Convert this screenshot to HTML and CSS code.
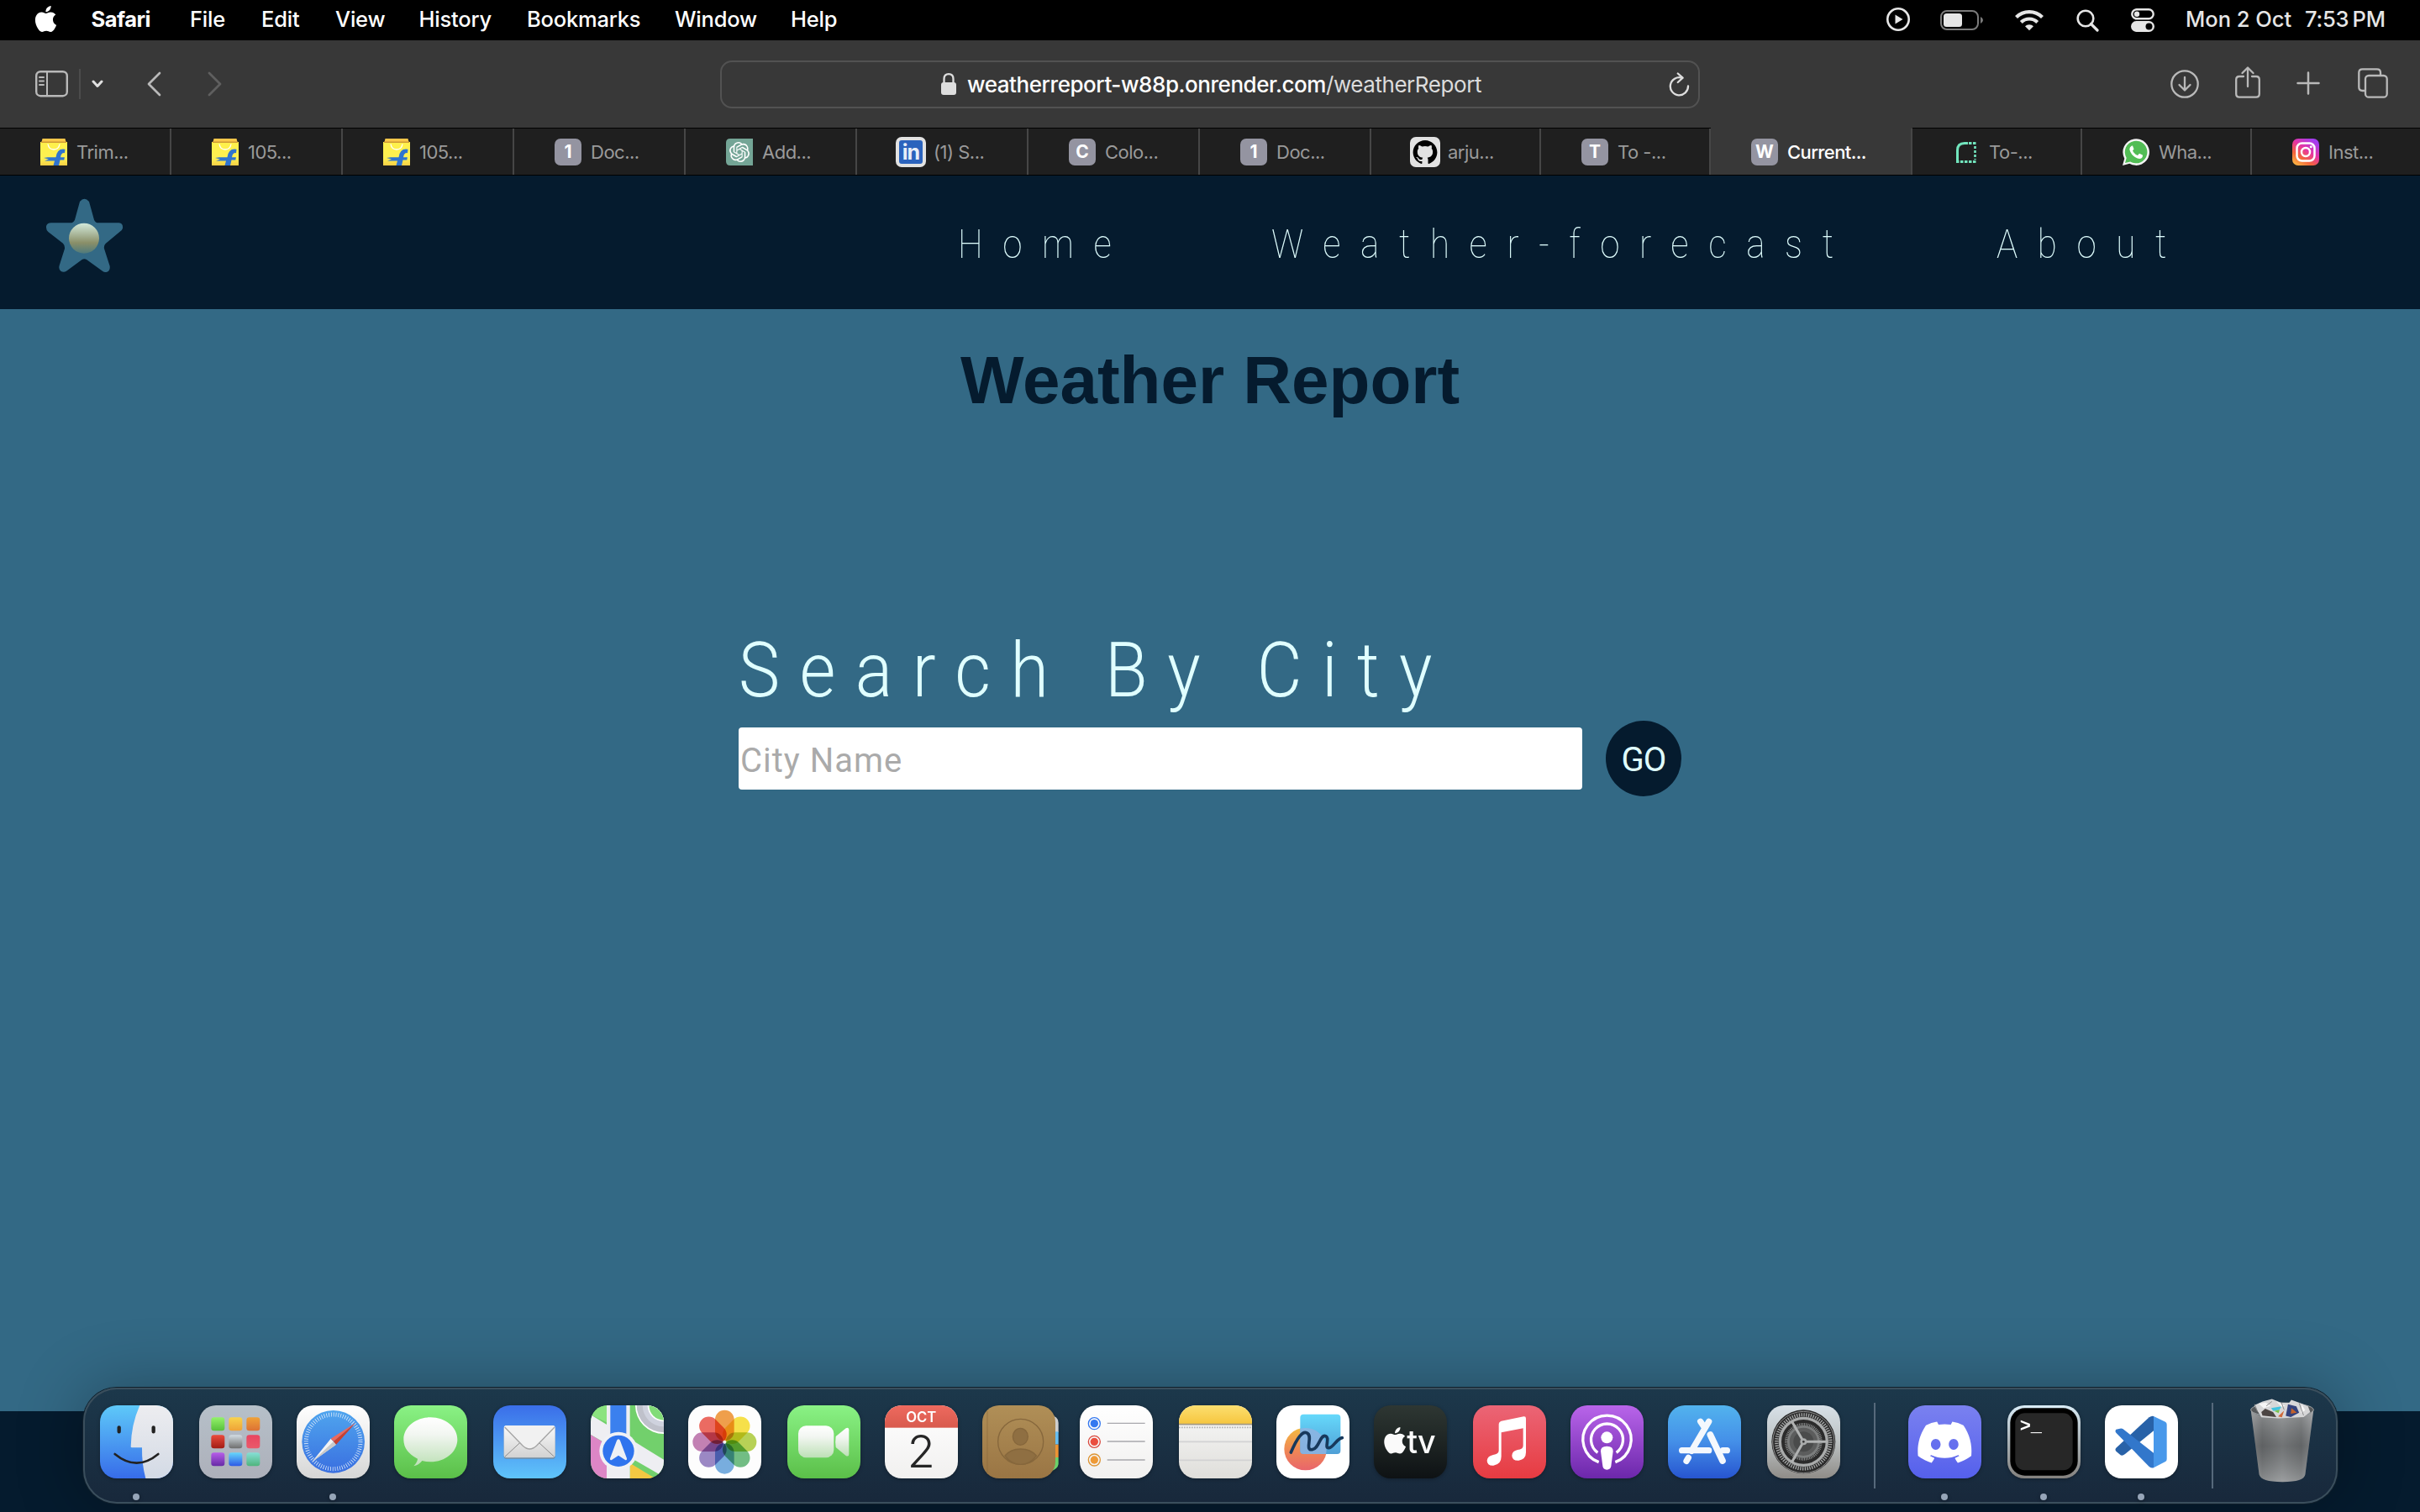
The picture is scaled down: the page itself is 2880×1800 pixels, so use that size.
FILE: index.html
```html
<!DOCTYPE html>
<html lang="en">
<head>
<meta charset="utf-8">
<title>Current Weather</title>
<link rel="stylesheet" href="styles.css">
</head>
<body>
<svg class="defs" width="0" height="0" aria-hidden="true">
  <defs>
    <path id="apple" d="M12.152 6.896c-.948 0-2.415-1.078-3.96-1.04-2.04.027-3.91 1.183-4.961 3.014-2.117 3.675-.546 9.103 1.519 12.09 1.013 1.454 2.208 3.09 3.792 3.039 1.52-.065 2.09-.987 3.935-.987 1.831 0 2.35.987 3.96.948 1.637-.026 2.676-1.48 3.676-2.948 1.156-1.688 1.636-3.325 1.662-3.415-.039-.013-3.182-1.221-3.22-4.857-.026-3.04 2.48-4.494 2.597-4.559-1.429-2.09-3.623-2.324-4.39-2.376-2-.156-3.675 1.09-4.61 1.09zM15.53 3.83c.843-1.012 1.4-2.427 1.245-3.83-1.207.052-2.662.805-3.532 1.818-.78.896-1.454 2.338-1.273 3.714 1.338.104 2.715-.688 3.559-1.701"/>
    <clipPath id="tile"><rect width="261" height="261" rx="60"/></clipPath>
    <linearGradient id="g-yellow" x2="0" y2="1"><stop offset="0" stop-color="#fff04a"/><stop offset=".7" stop-color="#fdf052"/><stop offset="1" stop-color="#f6cf45"/></linearGradient>
    <linearGradient id="g-insta" x1="0" y1="1" x2=".7" y2="0"><stop offset="0" stop-color="#fdc945"/><stop offset=".35" stop-color="#f4653a"/><stop offset=".65" stop-color="#e534a5"/><stop offset="1" stop-color="#a33df0"/></linearGradient>
    <linearGradient id="g-orb" x2="0" y2="1"><stop offset="0" stop-color="#d3eadb"/><stop offset=".65" stop-color="#8a8f68"/><stop offset="1" stop-color="#4f7a7c"/></linearGradient>
    <linearGradient id="g-white" x2="0" y2="1"><stop offset="0" stop-color="#fff"/><stop offset="1" stop-color="#d6d6d6"/></linearGradient>
    <linearGradient id="g-green" x2="0" y2="1"><stop offset="0" stop-color="#8af285"/><stop offset="1" stop-color="#5bbf49"/></linearGradient>
    <linearGradient id="g-bubble" x2="0" y2="1"><stop offset="0" stop-color="#fff"/><stop offset=".35" stop-color="#f2f6f1"/><stop offset="1" stop-color="#bde0b6"/></linearGradient>
    <linearGradient id="g-finder" x2="0" y2="1"><stop offset="0" stop-color="#5ec9f9"/><stop offset="1" stop-color="#376ce9"/></linearGradient>
    <linearGradient id="g-face" x2="0" y2="1"><stop offset="0" stop-color="#ededf0"/><stop offset="1" stop-color="#d3dae5"/></linearGradient>
    <linearGradient id="g-pad" x2="0" y2="1"><stop offset="0" stop-color="#b6c0c9"/><stop offset="1" stop-color="#adb0ba"/></linearGradient>
    <linearGradient id="g-safari" x2="0" y2="1"><stop offset="0" stop-color="#4fa5ee"/><stop offset="1" stop-color="#3a6fe0"/></linearGradient>
    <linearGradient id="g-mail" x2="0" y2="1"><stop offset="0" stop-color="#3a6ee9"/><stop offset="1" stop-color="#5fc4fa"/></linearGradient>
    <linearGradient id="g-env" x2="0" y2="1"><stop offset="0" stop-color="#fafafa"/><stop offset="1" stop-color="#d2d2d2"/></linearGradient>
    <linearGradient id="g-red" x2="0" y2="1"><stop offset="0" stop-color="#ee6a5f"/><stop offset="1" stop-color="#d85a4d"/></linearGradient>
    <linearGradient id="g-paper" x2="0" y2="1"><stop offset="0" stop-color="#fff"/><stop offset="1" stop-color="#f1f0ef"/></linearGradient>
    <linearGradient id="g-book" x2="0" y2="1"><stop offset="0" stop-color="#b08f57"/><stop offset="1" stop-color="#9a7544"/></linearGradient>
    <linearGradient id="g-notes" x2="0" y2="1"><stop offset="0" stop-color="#fcdf70"/><stop offset="1" stop-color="#f6c63f"/></linearGradient>
    <linearGradient id="g-notepaper" x2="0" y2="1"><stop offset="0" stop-color="#fafafa"/><stop offset="1" stop-color="#dfdeda"/></linearGradient>
    <linearGradient id="g-ball" x2="0" y2="1"><stop offset="0" stop-color="#f4bc41"/><stop offset=".5" stop-color="#ef8a54"/><stop offset="1" stop-color="#e9656b"/></linearGradient>
    <linearGradient id="g-square" x2="0" y2="1"><stop offset="0" stop-color="#66d9fb"/><stop offset="1" stop-color="#4f9fd6"/></linearGradient>
    <linearGradient id="g-tv" x2="0" y2="1"><stop offset="0" stop-color="#2e3733"/><stop offset="1" stop-color="#0e1214"/></linearGradient>
    <linearGradient id="g-music" x2="0" y2="1"><stop offset="0" stop-color="#eb6576"/><stop offset="1" stop-color="#e73b41"/></linearGradient>
    <linearGradient id="g-pod" x2="0" y2="1"><stop offset="0" stop-color="#b965ea"/><stop offset="1" stop-color="#6c27ab"/></linearGradient>
    <linearGradient id="g-store" x2="0" y2="1"><stop offset="0" stop-color="#52b3ee"/><stop offset=".5" stop-color="#448fe8"/><stop offset="1" stop-color="#2755d0"/></linearGradient>
    <linearGradient id="g-set" x2="0" y2="1"><stop offset="0" stop-color="#d8e1e8"/><stop offset=".5" stop-color="#bcc2c3"/><stop offset="1" stop-color="#8f8c88"/></linearGradient>
    <linearGradient id="g-disc" x2="0" y2="1"><stop offset="0" stop-color="#7a81f0"/><stop offset="1" stop-color="#5560ec"/></linearGradient>
    <linearGradient id="g-term" x2="0" y2="1"><stop offset="0" stop-color="#d9ecf7"/><stop offset=".5" stop-color="#a9b2b6"/><stop offset="1" stop-color="#84817e"/></linearGradient>
    <linearGradient id="g-can"><stop offset="0" stop-color="#8b8d8f"/><stop offset=".18" stop-color="#6e7173"/><stop offset=".5" stop-color="#848789"/><stop offset=".8" stop-color="#727577"/><stop offset="1" stop-color="#94979a"/></linearGradient>
    <linearGradient id="g-canfade" x2="0" y2="1"><stop offset="0" stop-color="#fff" stop-opacity=".22"/><stop offset=".5" stop-color="#000" stop-opacity=".14"/><stop offset="1" stop-color="#fff" stop-opacity=".2"/></linearGradient>
    <linearGradient id="t1" x2="0" y2="1"><stop offset="0" stop-color="#93f26a"/><stop offset="1" stop-color="#58bf3c"/></linearGradient>
    <linearGradient id="t2" x2="0" y2="1"><stop offset="0" stop-color="#f8d34c"/><stop offset="1" stop-color="#efa238"/></linearGradient>
    <linearGradient id="t3" x2="0" y2="1"><stop offset="0" stop-color="#efa238"/><stop offset="1" stop-color="#dc7135"/></linearGradient>
    <linearGradient id="t4" x2="0" y2="1"><stop offset="0" stop-color="#ea4b3c"/><stop offset="1" stop-color="#a11c14"/></linearGradient>
    <linearGradient id="t5" x2="0" y2="1"><stop offset="0" stop-color="#d2dce2"/><stop offset="1" stop-color="#6d6d6d"/></linearGradient>
    <linearGradient id="t6" x2="0" y2="1"><stop offset="0" stop-color="#e94560"/><stop offset="1" stop-color="#ea5a6b"/></linearGradient>
    <linearGradient id="t7" x2="0" y2="1"><stop offset="0" stop-color="#b65ee8"/><stop offset="1" stop-color="#662aa5"/></linearGradient>
    <linearGradient id="t8" x2="0" y2="1"><stop offset="0" stop-color="#66d6fb"/><stop offset="1" stop-color="#2c58e6"/></linearGradient>
    <linearGradient id="t9" x2="0" y2="1"><stop offset="0" stop-color="#86dfd6"/><stop offset="1" stop-color="#4fb47c"/></linearGradient>
    <g id="bag">
      <path d="M2.500 0h27l1 4h-29z" fill="#fbc84a"/><path d="M0 4h32v28H0z" fill="url(#g-yellow)"/><path d="M1 3.500h30v1.500H1z" fill="#cf9a35"/>
      <path d="M9 6.500q1 6.500 7 6.500t7-6.500" fill="none" stroke="#fff" stroke-width="1.300"/>
      <path d="M29.500 12.800Q20 11 18.500 22.300H9l-5 .7 6 1.400-5 2.100h12L15.500 32H22l1.500-6.500h4.800l.6-3.300H24q1-5.700 5-5z" fill="#2f74cf"/>
    </g>
  </defs>
</svg>

<header class="menubar">
  <svg class="menubar-apple" width="31" height="31" viewBox="0 0 24 24" fill="#fff"><use href="#apple"/></svg>
  <nav class="menus">
    <b>Safari</b><span>File</span><span>Edit</span><span>View</span><span>History</span><span>Bookmarks</span><span>Window</span><span>Help</span>
  </nav>
  <div class="status">
    <svg width="28" height="28" viewBox="0 0 28 28"><circle cx="14" cy="14" r="12.700" fill="none" stroke="#e6e6e6" stroke-width="2.600"/><path d="M10.500 8.500v11l9-5.500z" fill="#e6e6e6"/></svg>
    <svg class="st-batt" width="52" height="24" viewBox="0 0 52 24"><rect x="1" y="1" width="44" height="22" rx="7" fill="none" stroke="#7b7b7b" stroke-width="2"/><rect x="4" y="4" width="22" height="16" rx="3.500" fill="#e6e6e6"/><path d="M48 8q3 1.500 3 4t-3 4z" fill="#7b7b7b"/></svg>
    <svg class="st-wifi" width="36" height="26" viewBox="0 0 36 26" fill="none" stroke="#e6e6e6" stroke-width="4.200"><path d="M2.500 9.500a22 22 0 0 1 31 0"/><path d="M8.300 15.500a13.800 13.800 0 0 1 19.400 0"/><path d="M13 20.300a7 7 0 0 1 10 0L18 25.300z" fill="#e6e6e6" stroke="none"/></svg>
    <svg class="st-search" width="27" height="27" viewBox="0 0 27 27" fill="none" stroke="#e6e6e6" stroke-width="2.600"><circle cx="11" cy="11" r="9.300"/><path d="M17.500 17.500l7.500 7.500" stroke-width="3.200" stroke-linecap="round"/></svg>
    <svg class="st-ctrl" width="28" height="28" viewBox="0 0 28 28"><rect x="1.300" y="1.300" width="25.400" height="11" rx="5.500" fill="none" stroke="#e6e6e6" stroke-width="2.400"/><circle cx="7" cy="6.800" r="3.200" fill="#e6e6e6"/><rect y="15" width="28" height="13" rx="6.500" fill="#e6e6e6"/><circle cx="21.500" cy="21.500" r="4" fill="#000"/></svg>
    <span class="date">Mon 2 Oct</span><span class="time">7:53&#8201;PM</span>
  </div>
</header>

<section class="toolbar">
  <div class="tools-left">
    <svg width="39" height="32" viewBox="0 0 39 32" fill="none" stroke="#b9b9b9"><rect x="1.200" y="1.200" width="36.600" height="29" rx="5" stroke-width="2.400"/><path d="M14 1v29" stroke-width="2"/><path d="M5 8h5M5 12.500h5M5 17h5" stroke-width="2" stroke-linecap="round"/></svg>
    <i class="vline"></i>
    <svg width="14" height="10" viewBox="0 0 14 10" fill="none" stroke="#e0e0e0" stroke-width="3" stroke-linecap="round" stroke-linejoin="round"><path d="M2 2l5 5.500 5-5.500"/></svg>
    <svg class="back" width="17" height="30" viewBox="0 0 17 30" fill="none" stroke="#b9b9b9" stroke-width="2.700" stroke-linecap="round" stroke-linejoin="round"><path d="M15 2L2 15l13 13"/></svg>
    <svg class="forward" width="17" height="30" viewBox="0 0 17 30" fill="none" stroke="#5f5f5f" stroke-width="2.700" stroke-linecap="round" stroke-linejoin="round"><path d="M2 2l13 13L2 28"/></svg>
  </div>
  <div class="address">
    <svg width="18" height="26" viewBox="0 0 18 26"><rect y="11" width="18" height="15" rx="3" fill="#dedede"/><path d="M3.500 12V7q0-5.800 5.500-5.800T14.500 7v5" fill="none" stroke="#dedede" stroke-width="2.300"/></svg>
    <span class="url">weatherreport-w88p.onrender.com<em>/weatherReport</em></span>
    <svg class="reload" width="25" height="29" viewBox="0 0 25 29" fill="none" stroke="#dedede" stroke-width="2.300" stroke-linecap="round" stroke-linejoin="round"><path d="M15.500 6.600A10.600 10.600 0 1 0 23 16.500"/><path d="M10.800 1.500l5.800 5.200-5.800 5.300"/></svg>
  </div>
  <div class="tools-right">
    <svg width="34" height="34" viewBox="0 0 34 34" fill="none" stroke="#b9b9b9" stroke-width="2.300" stroke-linecap="round" stroke-linejoin="round"><circle cx="17" cy="17" r="15.700"/><path d="M17 9v15M10.500 18l6.500 6.500 6.500-6.500"/></svg>
    <svg class="share" width="30" height="38" viewBox="0 0 30 38" fill="none" stroke="#b9b9b9" stroke-width="2.300" stroke-linecap="round" stroke-linejoin="round"><path d="M10 12H5q-3.800 0-3.800 3.800v17Q1.200 36.600 5 36.600h20q3.800 0 3.800-3.800v-17Q28.800 12 25 12h-5M15 24V2M8.500 8L15 1.500 21.500 8"/></svg>
    <svg class="plus" width="28" height="28" viewBox="0 0 28 28" stroke="#b9b9b9" stroke-width="2.500" stroke-linecap="round"><path d="M14 1.500v25M1.500 14h25"/></svg>
    <svg class="tabs-icon" width="36" height="36" viewBox="0 0 36 36" fill="none" stroke="#b9b9b9" stroke-width="2.300"><rect x="9" y="9" width="25.700" height="25.700" rx="4"/><path d="M9 27H5.500Q1.300 27 1.300 22.800V5.500Q1.300 1.300 5.500 1.300h17.300Q27 1.300 27 5.500V9"/></svg>
  </div>
</section>

<nav class="tabs">
  <div class="tab"><svg class="fav" viewBox="0 0 32 32"><use href="#bag"/></svg><span>Trim...</span></div>
  <div class="tab"><svg class="fav" viewBox="0 0 32 32"><use href="#bag"/></svg><span>105...</span></div>
  <div class="tab"><svg class="fav" viewBox="0 0 32 32"><use href="#bag"/></svg><span>105...</span></div>
  <div class="tab"><b class="fav letter">1</b><span>Doc...</span></div>
  <div class="tab"><svg class="fav" viewBox="0 0 32 32"><path d="M5 0h27v32H5q-5 0-5-5V5q0-5 5-5z" fill="#74a596"/><path transform="translate(4 4)" fill="#fff" d="M22.282 9.821a5.985 5.985 0 0 0-.516-4.910 6.046 6.046 0 0 0-6.510-2.900A6.065 6.065 0 0 0 4.981 4.182a5.985 5.985 0 0 0-3.998 2.900 6.046 6.046 0 0 0 .743 7.097 5.980 5.980 0 0 0 .511 4.911 6.051 6.051 0 0 0 6.515 2.900A5.985 5.985 0 0 0 13.260 24a6.056 6.056 0 0 0 5.772-4.206 5.989 5.989 0 0 0 3.998-2.900 6.056 6.056 0 0 0-.748-7.073zm-9.022 12.608a4.476 4.476 0 0 1-2.876-1.041l.142-.080 4.778-2.758a.795.795 0 0 0 .393-.681v-6.737l2.020 1.169a.071.071 0 0 1 .038.052v5.583a4.504 4.504 0 0 1-4.495 4.493zm-9.661-4.125a4.471 4.471 0 0 1-.535-3.014l.142.085 4.783 2.758a.771.771 0 0 0 .781 0l5.843-3.369v2.332a.080.080 0 0 1-.033.062L9.740 19.950a4.499 4.499 0 0 1-6.141-1.646zM2.341 7.896a4.485 4.485 0 0 1 2.366-1.973V11.600a.766.766 0 0 0 .388.677l5.814 3.354-2.020 1.169a.076.076 0 0 1-.071 0l-4.830-2.787A4.504 4.504 0 0 1 2.341 7.872zm16.596 3.856L13.104 8.364 15.119 7.200a.076.076 0 0 1 .071 0l4.830 2.791a4.494 4.494 0 0 1-.677 8.104v-5.677a.790.790 0 0 0-.406-.666zm2.011-3.023l-.142-.085-4.774-2.782a.776.776 0 0 0-.785 0L9.409 9.230V6.897a.066.066 0 0 1 .028-.062l4.830-2.787a4.499 4.499 0 0 1 6.680 4.660zM8.307 12.863l-2.020-1.164a.080.080 0 0 1-.038-.057V6.074a4.499 4.499 0 0 1 7.376-3.454l-.142.081L8.704 5.459a.795.795 0 0 0-.393.681zm1.097-2.365l2.602-1.500 2.607 1.500v2.999l-2.597 1.500-2.607-1.500Z"/></svg><span>Add...</span></div>
  <div class="tab"><b class="fav big linkedin"><i>in</i></b><span>(1) S...</span></div>
  <div class="tab"><b class="fav letter">C</b><span>Colo...</span></div>
  <div class="tab"><b class="fav letter">1</b><span>Doc...</span></div>
  <div class="tab short"><svg class="fav big" viewBox="0 0 36 36"><rect width="36" height="36" rx="7" fill="#e2e2e2"/><path transform="translate(3.600 3.600) scale(1.200)" d="M12 .297c-6.630 0-12 5.373-12 12 0 5.303 3.438 9.800 8.205 11.385.6.113.82-.258.82-.577 0-.285-.010-1.040-.015-2.040-3.338.724-4.042-1.610-4.042-1.610C4.422 18.070 3.633 17.700 3.633 17.700c-1.087-.744.084-.729.084-.729 1.205.084 1.838 1.236 1.838 1.236 1.070 1.835 2.809 1.305 3.495.998.108-.776.417-1.305.76-1.605-2.665-.3-5.466-1.332-5.466-5.930 0-1.310.465-2.380 1.235-3.220-.135-.303-.54-1.523.105-3.176 0 0 1.005-.322 3.300 1.230.96-.267 1.980-.399 3-.405 1.020.006 2.040.138 3 .405 2.280-1.552 3.285-1.230 3.285-1.230.645 1.653.24 2.873.12 3.176.765.84 1.230 1.910 1.230 3.220 0 4.610-2.805 5.625-5.475 5.920.42.36.81 1.096.81 2.220 0 1.606-.015 2.896-.015 3.286 0 .315.21.69.825.57C20.565 22.092 24 17.592 24 12.297c0-6.627-5.373-12-12-12"/></svg><span>arju...</span></div>
  <div class="tab short"><b class="fav letter">T</b><span>To -...</span></div>
  <div class="tab active"><b class="fav letter">W</b><span>Current...</span></div>
  <div class="tab short"><svg class="fav" viewBox="0 0 32 32" fill="none" stroke="#72e5bd"><path d="M5.500 28.500V14q0-8.500 8.500-8.500h4" stroke-width="3"/><path d="M19 5.500h9M4 27.500h24" stroke-width="3" stroke-dasharray="3.500 1.500"/><path d="M26.500 9v16" stroke-width="2.600" stroke-dasharray="3 2"/></svg><span>To-...</span></div>
  <div class="tab short"><svg class="fav" viewBox="0 0 32 32"><path d="M0 32l2.300-8.300A15.800 15.800 0 1 1 8.300 29.800z" fill="#f4f4f4"/><path d="M3 29l1.700-6.100A13.300 13.300 0 1 1 9.200 27.400z" fill="#52bd55"/><path d="M11 8.500q-3 1.500-2.600 4.800 1.800 7 9.300 10.300 5.300 1.500 6.300-2.800l-.2-1.300-3.800-1.800-2 2.300q-4-1.500-6-5.500l1.500-2-1.500-4z" fill="#fff"/></svg><span>Wha...</span></div>
  <div class="tab last"><svg class="fav" viewBox="0 0 32 32" fill="none" stroke="#fff" stroke-width="2.500"><rect width="32" height="32" rx="7" fill="url(#g-insta)" stroke="none"/><rect x="5.500" y="5.500" width="21" height="21" rx="6"/><circle cx="16" cy="16" r="5"/><circle cx="22.300" cy="9.700" r="1.500" fill="#fff" stroke="none"/></svg><span>Inst...</span></div>
</nav>

<div class="site">
  <nav class="site-nav">
    <svg class="logo" width="96" height="92" viewBox="66 255 288 276"><path d="M195 270Q211 250 228 270L246 335Q250 346 262 346H335Q350 347 348 365 346 372 340 376L287 420Q280 427 282 438L302 500Q304 518 292 521 283 524 276 518L219 477Q211 472 203 477L147 518Q138 524 128 519 118 512 122 498L141 438Q142 426 135 419L82 378Q72 368 76 355 80 346 92 346H160Q173 346 177 335z" fill="#336985"/><circle class="orb" cx="210" cy="401" r="54" fill="url(#g-orb)"/></svg>
    <a>Home</a><a>Weather-forecast</a><a>About</a>
  </nav>
  <main>
    <h1>Weather Report</h1>
    <form class="search">
      <label for="city">Search By City</label>
      <div class="field"><input id="city" type="text" placeholder="City Name"><button type="button">GO</button></div>
    </form>
  </main>
  <footer></footer>
</div>

<div class="dock">
  <div class="app running"><svg viewBox="0 0 261 261"><g clip-path="url(#tile)"><rect width="261" height="261" fill="url(#g-finder)"/><path d="M142 0Q111 70 110 148q0 3 4 3h36q-1 60 13 110H261V0z" fill="url(#g-face)"/></g><g stroke="#222" stroke-linecap="round" fill="none"><path d="M68 79v15M191 79v15" stroke-width="13"/><path d="M53 174q78 64 155 0" stroke-width="8"/></g></svg></div>
  <div class="app"><svg viewBox="0 0 261 261"><rect width="261" height="261" rx="60" fill="url(#g-pad)"/><g><rect x="43" y="43" width="48" height="48" rx="10" fill="url(#t1)"/><rect x="106" y="43" width="48" height="48" rx="10" fill="url(#t2)"/><rect x="169" y="43" width="48" height="48" rx="10" fill="url(#t3)"/><rect x="43" y="106" width="48" height="48" rx="10" fill="url(#t4)"/><rect x="106" y="106" width="48" height="48" rx="10" fill="url(#t5)"/><rect x="169" y="106" width="48" height="48" rx="10" fill="url(#t6)"/><rect x="43" y="169" width="48" height="48" rx="10" fill="url(#t7)"/><rect x="106" y="169" width="48" height="48" rx="10" fill="url(#t8)"/><rect x="169" y="169" width="48" height="48" rx="10" fill="url(#t9)"/></g></svg></div>
  <div class="app running"><svg viewBox="0 0 261 261"><rect width="261" height="261" rx="60" fill="url(#g-white)"/><circle cx="131" cy="130" r="112" fill="url(#g-safari)"/><circle cx="131" cy="130" r="97" fill="none" stroke="#dceafa" stroke-width="15" stroke-dasharray="2.400 6.060"/><path d="M55 202L122 119l19 21z" fill="#f3f3f3"/><path d="M55 202l77-73 9 11z" fill="#c9c9c9"/><path d="M211 62L122 119l10 10z" fill="#ec6a5e"/><path d="M211 62l-79 67 9 11z" fill="#c9402f"/></svg></div>
  <div class="app"><svg viewBox="0 0 261 261"><rect width="261" height="261" rx="60" fill="url(#g-green)"/><path d="M130 43c53 0 96 35 96 79s-43 80-96 80q-16 0-30-4-12 16-30 19 13-14 14-26Q34 165 34 122c0-44 43-79 96-79z" fill="url(#g-bubble)"/></svg></div>
  <div class="app"><svg viewBox="0 0 261 261"><rect width="261" height="261" rx="60" fill="url(#g-mail)"/><rect x="38" y="74" width="183" height="117" rx="9" fill="#7d7d7d" opacity=".7"/><rect x="38" y="72" width="183" height="115" rx="9" fill="url(#g-env)"/><path d="M42 183l54-50M217 183l-54-50" stroke="#8d8d8d" stroke-width="3"/><path d="M41 76l64 66q25 24 50 0l64-66q-3-4-8-4H48q-5 0-7 4z" fill="#f1f1f1"/><path d="M41 78l64 66q25 24 50 0l64-66" fill="none" stroke="#a5a5a5" stroke-width="4"/></svg></div>
  <div class="app"><svg viewBox="0 0 261 261"><g clip-path="url(#tile)"><rect width="261" height="261" fill="#72d06c"/><path d="M0 0h60v62L0 34z" fill="#8be37f"/><path d="M0 34l261 160v62L0 105z" fill="#eeeef2"/><path d="M0 105l100 60v96H0z" fill="#dd86c6"/><path d="M140 206l90 55h-90z" fill="#f3c843"/><path d="M57 0h83v261H57z" fill="#eeeef2"/><path d="M70 0h57v120H70z" fill="#3b80ee"/><circle cx="261" cy="0" r="102" fill="#fff"/><circle cx="261" cy="0" r="97" fill="#bfc1cb"/><circle cx="261" cy="0" r="76" fill="#cfd2de"/><circle cx="261" cy="0" r="58" fill="#fff"/><circle cx="261" cy="0" r="53" fill="#82dc78"/></g><circle cx="99" cy="163" r="68" fill="#f0f1f5"/><circle cx="99" cy="163" r="56" fill="#2f74ee"/><path d="M99 121q4 0 6 5l24 64q1 8-6 5l-24-16-24 16q-7 3-6-5l24-64q2-5 6-5z" fill="#eef1f5"/></svg></div>
  <div class="app"><svg viewBox="0 0 261 261"><rect width="261" height="261" rx="60" fill="#fdfdfd"/><g class="petals"><rect x="96" y="17" width="68" height="110" rx="34" fill="#f0993e"/><rect x="96" y="17" width="68" height="110" rx="34" fill="#f8e03c" transform="rotate(45 130 131)"/><rect x="96" y="17" width="68" height="110" rx="34" fill="#b4d04a" transform="rotate(90 130 131)"/><rect x="96" y="17" width="68" height="110" rx="34" fill="#68ba7c" transform="rotate(135 130 131)"/><rect x="96" y="17" width="68" height="110" rx="34" fill="#6fa9de" transform="rotate(180 130 131)"/><rect x="96" y="17" width="68" height="110" rx="34" fill="#9480c2" transform="rotate(225 130 131)"/><rect x="96" y="17" width="68" height="110" rx="34" fill="#c078b0" transform="rotate(270 130 131)"/><rect x="96" y="17" width="68" height="110" rx="34" fill="#ec6157" transform="rotate(315 130 131)"/></g><circle cx="130" cy="131" r="6" fill="#f2f2f2"/></svg></div>
  <div class="app"><svg viewBox="0 0 261 261"><rect width="261" height="261" rx="60" fill="url(#g-green)"/><rect x="39" y="73" width="127" height="114" rx="28" fill="url(#g-bubble)"/><path d="M173 111l36-29q11-5 11 6v86q0 11-11 6l-36-30q-3-19 0-39z" fill="url(#g-bubble)"/></svg></div>
  <div class="app"><svg viewBox="0 0 261 261"><g clip-path="url(#tile)"><rect width="261" height="261" fill="url(#g-paper)"/><rect width="261" height="80" fill="url(#g-red)"/></g><text class="cal-month" x="130" y="61">OCT</text><text class="cal-day" x="130" y="221">2</text></svg></div>
  <div class="app"><svg class="wide" viewBox="0 0 273 261"><path d="M240 34q32 5 32 28v34h-32z" fill="#cfcfcf"/><path d="M240 94h32v46h-32z" fill="#66bff2"/><path d="M240 140h32v46h-32z" fill="#ee9434"/><path d="M240 186h32v24q-2 18-32 28z" fill="#6bd26b"/><rect width="261" height="261" rx="60" fill="url(#g-book)"/><path d="M18 20v221" stroke="#8a6a3d" stroke-width="4" opacity=".5"/><g stroke="#86673c" stroke-width="4"><circle cx="137" cy="130" r="81" fill="none"/><ellipse cx="136" cy="112" rx="27" ry="30" fill="#8f6f42"/><path d="M81 180q20-24 56-24t56 24q-22 31-56 31t-56-31z" fill="#8f6f42"/></g></svg></div>
  <div class="app"><svg viewBox="0 0 261 261"><rect width="261" height="261" rx="60" fill="url(#g-paper)"/><g fill="none" stroke-width="4"><circle cx="52" cy="65" r="21" stroke="#3478f0"/><circle cx="52" cy="130" r="21" stroke="#d9493e"/><circle cx="52" cy="195" r="21" stroke="#dd9433"/></g><circle cx="52" cy="65" r="14" fill="#3478f0"/><circle cx="52" cy="130" r="14" fill="#ea4e3f"/><circle cx="52" cy="195" r="14" fill="#ee9a37"/><path d="M98 64h135M98 129h135M98 195h135" stroke="#a8a8ad" stroke-width="4"/></svg></div>
  <div class="app"><svg viewBox="0 0 261 261"><g clip-path="url(#tile)"><rect width="261" height="261" fill="url(#g-notepaper)"/><rect width="261" height="66" fill="url(#g-notes)"/><path d="M0 68h261" stroke="#a39a84" stroke-width="5"/><path d="M0 79h261" stroke="#b5b5b5" stroke-width="5" stroke-dasharray="5 4"/><path d="M0 130h261M0 196h261" stroke="#d2d2d3" stroke-width="5"/></g></svg></div>
  <div class="app"><svg viewBox="0 0 261 261"><rect width="261" height="261" rx="60" fill="#fff"/><circle cx="104" cy="156" r="76" fill="url(#g-ball)"/><rect x="85" y="32" width="144" height="142" rx="12" fill="url(#g-square)"/><path d="M85 83a76 76 0 0 1 92 91H97q-12 0-12-12z" fill="#8fb4e0" opacity=".85"/><path d="M52 168Q86 88 108 98c26 10-10 64 20 60 24-2 28-56 48-48 18 8-8 44 12 42 16-2 26-32 47-36" fill="none" stroke="#17395c" stroke-width="11" stroke-linecap="round"/></svg></div>
  <div class="app"><svg viewBox="0 0 261 261"><rect width="261" height="261" rx="60" fill="url(#g-tv)"/><use href="#apple" transform="translate(28 78) scale(3.950)" fill="#fafafa"/><text class="tv" x="118" y="172">tv</text></svg></div>
  <div class="app"><svg viewBox="0 0 261 261"><rect width="261" height="261" rx="60" fill="url(#g-music)"/><path d="M92 68q0-9 9-12l80-16q8-1 8 7v121q0 25-26 29-24 1-24-18 1-16 20-20 20-2 20-15V82l-78 15v86q0 28-28 32-23 1-23-18 2-16 22-20 20-3 20-15z" fill="#fff"/></svg></div>
  <div class="app"><svg viewBox="0 0 261 261"><rect width="261" height="261" rx="60" fill="url(#g-pod)"/><g fill="none" stroke="#fff" stroke-width="10"><path d="M101 203a86 86 0 1 1 59 0"/><path d="M97 169a57 57 0 1 1 67 0"/></g><circle cx="130" cy="115" r="21" fill="#fff"/><path d="M130 146q23 0 22 18l-7 53q-2 13-15 13t-15-13l-7-53q-1-18 22-18z" fill="#fff"/></svg></div>
  <div class="app"><svg viewBox="0 0 261 261"><rect width="261" height="261" rx="60" fill="url(#g-store)"/><g stroke="#f4f8fd" stroke-width="22" stroke-linecap="round"><path d="M116 58l12 18M146 58L84 163"/><path d="M151 105l44 93" stroke-width="23"/><path d="M50 161h96M196 161h15"/><path d="M73 187l-7 12"/></g><path d="M146 112q-2-10 4-18l16 30 32 64-14 8z" fill="#f4f8fd"/></svg></div>
  <div class="app"><svg viewBox="0 0 261 261"><rect width="261" height="261" rx="60" fill="url(#g-set)"/><circle cx="130" cy="130" r="114" fill="#2b2b2b"/><circle cx="130" cy="132" r="110" fill="none" stroke="#8e8e8e" stroke-width="3"/><circle cx="130" cy="130" r="96" fill="none" stroke="#a9abab" stroke-width="13" stroke-dasharray="3.800 4.570"/><circle cx="130" cy="130" r="84" fill="none" stroke="#a9abab" stroke-width="10"/><circle cx="130" cy="130" r="61" fill="none" stroke="#8a8c8c" stroke-width="12" stroke-dasharray="3 3"/><circle cx="130" cy="130" r="54" fill="#5c5d5d" stroke="#7c7e7e" stroke-width="8"/><circle cx="130" cy="130" r="36" fill="#4a4b4b"/><g stroke="#b0b2b2" stroke-width="9"><path d="M130 130h84M130 130L88 57M130 130l-42 73"/></g><circle cx="130" cy="130" r="12" fill="#a9abab"/><circle cx="130" cy="130" r="4" fill="#333"/></svg></div>
  <i class="sep"></i>
  <div class="app running"><svg viewBox="0 0 261 261"><rect width="261" height="261" rx="60" fill="url(#g-disc)"/><path transform="translate(34 36) scale(8)" fill="#fff" d="M20.317 4.370a19.791 19.791 0 00-4.885-1.515.074.074 0 00-.079.037c-.211.375-.445.865-.608 1.250-1.845-.276-3.680-.276-5.487 0-.164-.393-.406-.874-.618-1.250a.077.077 0 00-.079-.037 19.736 19.736 0 00-4.885 1.515.070.070 0 00-.032.028C.533 9.046-.319 13.580.099 18.058a.082.082 0 00.031.056c2.053 1.508 4.041 2.423 5.993 3.029a.078.078 0 00.084-.028c.462-.630.873-1.295 1.226-1.994a.076.076 0 00-.042-.106c-.653-.248-1.274-.550-1.872-.892a.077.077 0 01-.008-.128c.126-.094.252-.192.372-.291a.074.074 0 01.078-.011c3.928 1.793 8.180 1.793 12.061 0a.074.074 0 01.079.010c.120.099.246.198.373.292a.077.077 0 01-.007.128 12.299 12.299 0 01-1.873.891.077.077 0 00-.041.107c.360.698.772 1.363 1.225 1.993a.076.076 0 00.084.029c1.961-.607 3.950-1.522 6.002-3.029a.077.077 0 00.031-.055c.500-5.177-.838-9.674-3.549-13.660a.061.061 0 00-.031-.029zM8.020 15.331c-1.183 0-2.157-1.086-2.157-2.419 0-1.333.956-2.419 2.157-2.419 1.211 0 2.176 1.095 2.157 2.419 0 1.333-.956 2.419-2.157 2.419zm7.975 0c-1.183 0-2.157-1.086-2.157-2.419 0-1.333.955-2.419 2.157-2.419 1.211 0 2.176 1.095 2.157 2.419 0 1.333-.946 2.419-2.157 2.419Z"/></svg></div>
  <div class="app running"><svg viewBox="0 0 261 261"><rect width="261" height="261" rx="60" fill="url(#g-term)"/><rect x="10" y="10" width="241" height="241" rx="52" fill="#000"/><rect x="28" y="28" width="205" height="204" rx="34" fill="#272727"/><text class="prompt" x="44" y="92">&gt;_</text></svg></div>
  <div class="app running"><svg viewBox="0 0 261 261"><rect width="261" height="261" rx="60" fill="#fff"/><path d="M174 39v52L72 174q-9 7-16 4l-16-14q-5-6 0-12L158 43q8-6 16-4z" fill="#2862a8"/><path d="M40 98q-5-6 0-12l14-3q5-2 10 1l110 86v53q-8 2-16-4z" fill="#3277cb"/><path d="M174 39l42 20q5 3 5 9v124q0 7-5 9l-42 22z" fill="#4898ea"/></svg></div>
  <i class="sep"></i>
  <svg class="trash" viewBox="0 0 230 306"><path d="M2 42L32 275q6 27 84 27t82-27L228 42q-8 26-113 27Q10 68 2 42z" fill="url(#g-can)"/><path d="M2 42L32 275q6 27 84 27t82-27L228 42q-8 26-113 27Q10 68 2 42z" fill="url(#g-canfade)"/><ellipse cx="115" cy="42" rx="113" ry="25" fill="#55585a" stroke="#a3a5a6" stroke-width="3"/><path d="M14 26l30-14 34-9 34 14 28 0 8-11 38 14 22 10 8 20-24 18-90 5-62-4z" fill="#d7d7d8"/><path d="M40 50l14-12 28 12 12 18-50-5z" fill="#4c4543"/><path d="M75 36l38-6-8 12-22 4z" fill="#43c3de"/><path d="M86 46l20-4-4 12z" fill="#78c24a"/><path d="M122 45l-8 24-14-3z" fill="#cf6a3c"/><path d="M136 22l30 8 10 22-30 16-18-4z" fill="#34427c"/><path d="M148 36l20 16-22 4z" fill="#c3622d"/><path d="M30 20l26-4 18 12-26 8zM92 10l20 22 14-4zM186 22l12 22-16 10z" fill="#f6f6f6"/><path d="M16 22l10 26M112 16l10 26M176 18l16 44M78 12l-20 16" stroke="#8b8b8c" stroke-width="3"/></svg>
</div>
</body>
</html>
```
FILE: styles.css
```css
* { box-sizing: border-box; }
html, body { height: 100%; }
body {
  margin: 0;
  width: 2880px;
  height: 1800px;
  overflow: hidden;
  position: relative;
  display: flex;
  flex-direction: column;
  background: #336985;
  font-family: Inter, "Liberation Sans", sans-serif;
}
svg { display: block; flex: none; }
.defs { position: absolute; }

/* Menu bar */
.menubar {
  height: 48px;
  flex: none;
  display: flex;
  align-items: center;
  padding: 0 37px 3px 39px;
  background: #000;
  color: #fff;
  font-size: 25.5px;
  font-weight: 500;
  white-space: nowrap;
}
.menus {
  margin-left: 38.5px;
  display: grid;
  grid-template-columns: 117.5px 85px 88px 99.500px 128.500px 176px 138px auto;
  letter-spacing: -.2px;
}
.menus b { font-weight: 700; letter-spacing: -.5px; }
.status { margin-left: auto; display: flex; align-items: center; color: #e6e6e6; }
.st-batt { margin: 3px 0 0 36px; }
.st-wifi { margin: 2px 0 0 36px; }
.st-search { margin: 3px 0 0 38px; }
.st-ctrl { margin: 2px 0 0 38px; }
.date { margin-left: 37px; width: 142px; }
.time { width: 100px; letter-spacing: -.2px; }

/* Browser toolbar */
.toolbar {
  height: 104px;
  flex: none;
  display: flex;
  align-items: center;
  padding: 0 38px 0 42px;
  background: #383838;
}
.tools-left { display: flex; align-items: center; width: 815px; }
.vline { width: 2px; height: 36px; margin: 0 13px 0 13px; background: #4c4c4c; }
.back { margin-left: 52px; }
.forward { margin-left: 55px; }
.address {
  width: 1166px;
  height: 57px;
  display: flex;
  align-items: center;
  padding: 0 10px 0 261px;
  border: 2px solid #525252;
  border-radius: 14px;
  font-size: 26px;
  font-weight: 500;
  color: #fff;
}
.url { margin-left: 13px; letter-spacing: -.44px; }
.url em { font-style: normal; font-weight: 400; color: #dcdcdc; }
.reload { margin-left: auto; }
.tools-right { flex: 1; display: flex; align-items: center; justify-content: flex-end; }
.share { margin: 0 0 5px 43px; }
.plus { margin: 0 0 3px 43px; }
.tabs-icon { margin: 0 0 3px 45px; }

/* Tab strip */
.tabs { display: flex; height: 57px; flex: none; background: #1f1f1f; }
.tab {
  width: 204px;
  display: flex;
  align-items: center;
  padding-left: 48px;
  border: solid #000;
  border-width: 1px 0;
  box-shadow: inset -2px 0 #464646;
  color: #9a9a9a;
  font-size: 22px;
  letter-spacing: -.5px;
  white-space: nowrap;
}
.tab span { margin-left: 11px; }
.tab.short { width: 202px; }
.tab.active { width: 240px; background: #383838; border-top-color: #383838; color: #fff; font-weight: 500; letter-spacing: -.6px; }
.tab.last { width: 200px; box-shadow: none; }
.fav { width: 32px; height: 32px; flex: none; }
.fav.big { width: 36px; height: 36px; margin: 0 -2px; }
.letter {
  display: grid;
  place-items: center;
  border-radius: 7px;
  background: #9494a1;
  color: #fff;
  font-size: 21px;
  font-weight: 700;
  letter-spacing: 0;
}
.linkedin { padding: 4px; border-radius: 7px; background: #e2e2e2; }
.linkedin i {
  display: block;
  height: 28px;
  border-radius: 3px;
  background: #2b63bd;
  color: #e8eef8;
  font-size: 25px;
  line-height: 28px;
  font-style: normal;
  text-align: center;
  letter-spacing: -1px;
}

/* Weather site */
.site { flex: 1; display: flex; flex-direction: column; font-family: Roboto, "Liberation Sans", sans-serif; color: #e0ffff; }
.site-nav {
  height: 159px;
  flex: none;
  display: grid;
  grid-template-columns: 1088px 373px 863px auto;
  align-items: center;
  padding: 4px 0 0 52px;
  background: #051b2e;
}
.logo { margin-bottom: 19px; }
.orb { filter: blur(2px); }
.site-nav a {
  justify-self: start;
  font-size: 48px;
  font-weight: 250;
  letter-spacing: 26.8px;
  white-space: nowrap;
  transform: scaleX(.88);
  transform-origin: left;
}
main { flex: 1; display: flex; flex-direction: column; align-items: center; background: #336985; }
h1 {
  margin: 39px 0 0;
  font: bold 80px/92px "Liberation Sans", Arial, sans-serif;
  color: #051b2e;
}
.search { width: 1122px; margin-top: 243px; }
.search label {
  display: block;
  width: max-content;
  font-size: 90px;
  line-height: 114px;
  font-weight: 300;
  letter-spacing: 25.5px;
  transform: scaleX(.92);
  transform-origin: left;
}
.field { display: flex; align-items: center; gap: 28px; margin-top: 2px; }
.field input {
  width: 1004px;
  height: 74px;
  padding: 4px 2px 0;
  border: 0;
  border-radius: 4px;
  background: #fff;
  font: 400 40px Roboto, sans-serif;
  letter-spacing: 1px;
}
.field input::placeholder { color: #aaa; opacity: 1; }
.field button {
  width: 90px;
  height: 90px;
  padding: 2px 0 0;
  border: 0;
  border-radius: 50%;
  background: #051b2e;
  color: #e0ffff;
  font: 400 40px Roboto, sans-serif;
  letter-spacing: -1px;
}
footer { height: 120px; flex: none; background: #051b2e; }

/* Dock floats above the page */
.dock {
  position: absolute;
  left: 99px;
  top: 1652px;
  width: 2683px;
  height: 138px;
  display: flex;
  padding: 21px 0 0 19.500px;
  border-radius: 40px;
  background: linear-gradient(#1c384b, #18283b);
  box-shadow: inset 0 0 0 2px #3a4e5c, 0 0 0 1px #10202c, 0 0 80px rgba(0, 0, 0, .3);
}
.app { position: relative; width: 87px; height: 87px; margin-right: 29px; flex: none; filter: drop-shadow(0 1px 2px rgba(0, 0, 0, .3)); }
.app:nth-child(1), .app:nth-child(4), .app:nth-child(7), .app:nth-child(11),
.app:nth-child(14), .app:nth-child(17), .app:nth-child(20) { margin-right: 31px; }
.app svg { width: 87px; height: 87px; }
.app svg.wide { width: 91px; }
.running::after {
  content: "";
  position: absolute;
  left: 39.500px;
  top: 105px;
  width: 8px;
  height: 8px;
  border-radius: 50%;
  background: #96a5b8;
}
.sep { width: 2px; height: 102px; margin: -3px 38.500px 0 11.500px; background: #56697b; flex: none; }
.trash { width: 76px; height: 102px; margin: -9px 0 0 5px; }
.petals rect { mix-blend-mode: multiply; opacity: .93; }
.cal-month { font: 600 50px Inter, sans-serif; fill: #fff; text-anchor: middle; }
.cal-day { font: 300 162px Inter, sans-serif; fill: #262626; text-anchor: middle; }
.tv { font: 500 113px Inter, sans-serif; fill: #fafafa; letter-spacing: -3px; }
.prompt { font: bold 66px "Liberation Mono", monospace; fill: #fff; }
```
